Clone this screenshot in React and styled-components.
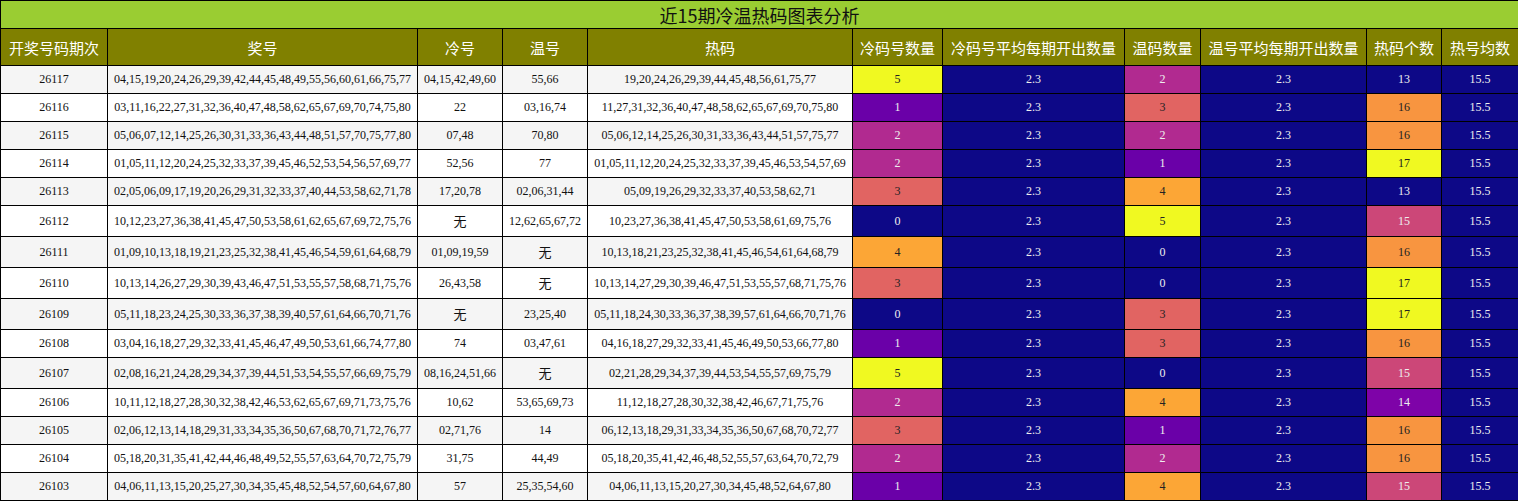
import styled, { createGlobalStyle } from "styled-components";

const Global = createGlobalStyle`
  body { margin: 0; background: #fff; }
`;

const Table = styled.table`
  width: 1518px;
  border-collapse: collapse;
  table-layout: fixed;
  font-family: "Liberation Serif", "Noto Sans CJK SC", serif;
  font-size: 12px;
  td, th { border: 1px solid #000; text-align: center; padding: 0; }
`;

const Title = styled.th`
  background: #9acd32;
  height: 27px;
  font-family: "Noto Sans CJK SC", sans-serif;
  font-size: 18px;
  font-weight: normal;
  color: #111;
  line-height: 26px;
`;

const Head = styled.th`
  background: #808000;
  color: #fff;
  height: 36px;
  font-family: "Noto Sans CJK SC", sans-serif;
  font-size: 15px;
  font-weight: normal;
  white-space: nowrap;
`;

const Row = styled.tr`
  background: ${(p) => (p.$odd ? "#f5f5f5" : "#fff")};
  td { height: 27px; color: #111; }
`;

const None = styled.span`
  display: inline-block;
  font-family: "Noto Sans CJK SC", sans-serif;
  font-size: 13px;
  line-height: 30px;
  vertical-align: middle;
`;

const Heat = styled.td`
  && { background: ${(p) => p.$bg}; color: ${(p) => (p.$dark ? "#eee" : "#222")}; }
`;

const plasma = ["#0d0887", "#6a00a8", "#b12a90", "#e16462", "#fca636", "#f0f921"];
const hot = { 13: "#0d0887", 14: "#7e03a8", 15: "#cc4778", 16: "#f89540", 17: "#f0f921" };

const widths = [107, 310, 85, 85, 265, 90, 182, 76, 166, 75, 77];
const heads = ["开奖号码期次", "奖号", "冷号", "温号", "热码", "冷码号数量", "冷码号平均每期开出数量", "温码数量", "温号平均每期开出数量", "热码个数", "热号均数"];

const rows = [
  ["26117", "04,15,19,20,24,26,29,39,42,44,45,48,49,55,56,60,61,66,75,77", "04,15,42,49,60", "55,66", "19,20,24,26,29,39,44,45,48,56,61,75,77", 5, 2, 13],
  ["26116", "03,11,16,22,27,31,32,36,40,47,48,58,62,65,67,69,70,74,75,80", "22", "03,16,74", "11,27,31,32,36,40,47,48,58,62,65,67,69,70,75,80", 1, 3, 16],
  ["26115", "05,06,07,12,14,25,26,30,31,33,36,43,44,48,51,57,70,75,77,80", "07,48", "70,80", "05,06,12,14,25,26,30,31,33,36,43,44,51,57,75,77", 2, 2, 16],
  ["26114", "01,05,11,12,20,24,25,32,33,37,39,45,46,52,53,54,56,57,69,77", "52,56", "77", "01,05,11,12,20,24,25,32,33,37,39,45,46,53,54,57,69", 2, 1, 17],
  ["26113", "02,05,06,09,17,19,20,26,29,31,32,33,37,40,44,53,58,62,71,78", "17,20,78", "02,06,31,44", "05,09,19,26,29,32,33,37,40,53,58,62,71", 3, 4, 13],
  ["26112", "10,12,23,27,36,38,41,45,47,50,53,58,61,62,65,67,69,72,75,76", "无", "12,62,65,67,72", "10,23,27,36,38,41,45,47,50,53,58,61,69,75,76", 0, 5, 15],
  ["26111", "01,09,10,13,18,19,21,23,25,32,38,41,45,46,54,59,61,64,68,79", "01,09,19,59", "无", "10,13,18,21,23,25,32,38,41,45,46,54,61,64,68,79", 4, 0, 16],
  ["26110", "10,13,14,26,27,29,30,39,43,46,47,51,53,55,57,58,68,71,75,76", "26,43,58", "无", "10,13,14,27,29,30,39,46,47,51,53,55,57,68,71,75,76", 3, 0, 17],
  ["26109", "05,11,18,23,24,25,30,33,36,37,38,39,40,57,61,64,66,70,71,76", "无", "23,25,40", "05,11,18,24,30,33,36,37,38,39,57,61,64,66,70,71,76", 0, 3, 17],
  ["26108", "03,04,16,18,27,29,32,33,41,45,46,47,49,50,53,61,66,74,77,80", "74", "03,47,61", "04,16,18,27,29,32,33,41,45,46,49,50,53,66,77,80", 1, 3, 16],
  ["26107", "02,08,16,21,24,28,29,34,37,39,44,51,53,54,55,57,66,69,75,79", "08,16,24,51,66", "无", "02,21,28,29,34,37,39,44,53,54,55,57,69,75,79", 5, 0, 15],
  ["26106", "10,11,12,18,27,28,30,32,38,42,46,53,62,65,67,69,71,73,75,76", "10,62", "53,65,69,73", "11,12,18,27,28,30,32,38,42,46,67,71,75,76", 2, 4, 14],
  ["26105", "02,06,12,13,14,18,29,31,33,34,35,36,50,67,68,70,71,72,76,77", "02,71,76", "14", "06,12,13,18,29,31,33,34,35,36,50,67,68,70,72,77", 3, 1, 16],
  ["26104", "05,18,20,31,35,41,42,44,46,48,49,52,55,57,63,64,70,72,75,79", "31,75", "44,49", "05,18,20,35,41,42,46,48,52,55,57,63,64,70,72,79", 2, 2, 16],
  ["26103", "04,06,11,13,15,20,25,27,30,34,35,45,48,52,54,57,60,64,67,80", "57", "25,35,54,60", "04,06,11,13,15,20,27,30,34,45,48,52,64,67,80", 1, 4, 15],
];

const txt = (v) => (v === "无" ? <None>无</None> : v);

export default function App() {
  return (
    <>
      <Global />
      <Table>
        <colgroup>
          {widths.map((w, i) => <col key={i} style={{ width: w }} />)}
        </colgroup>
        <thead>
          <tr><Title colSpan={11}>近15期冷温热码图表分析</Title></tr>
          <tr>{heads.map((h) => <Head key={h}>{h}</Head>)}</tr>
        </thead>
        <tbody>
          {rows.map((r, i) => (
            <Row key={r[0]} $odd={i % 2 === 0}>
              <td>{r[0]}</td>
              <td>{r[1]}</td>
              <td>{txt(r[2])}</td>
              <td>{txt(r[3])}</td>
              <td>{r[4]}</td>
              <Heat $bg={plasma[r[5]]} $dark={r[5] < 3}>{r[5]}</Heat>
              <Heat $bg="#0d0887" $dark>2.3</Heat>
              <Heat $bg={plasma[r[6]]} $dark={r[6] < 3}>{r[6]}</Heat>
              <Heat $bg="#0d0887" $dark>2.3</Heat>
              <Heat $bg={hot[r[7]]} $dark={r[7] < 16}>{r[7]}</Heat>
              <Heat $bg="#0d0887" $dark>15.5</Heat>
            </Row>
          ))}
        </tbody>
      </Table>
    </>
  );
}
